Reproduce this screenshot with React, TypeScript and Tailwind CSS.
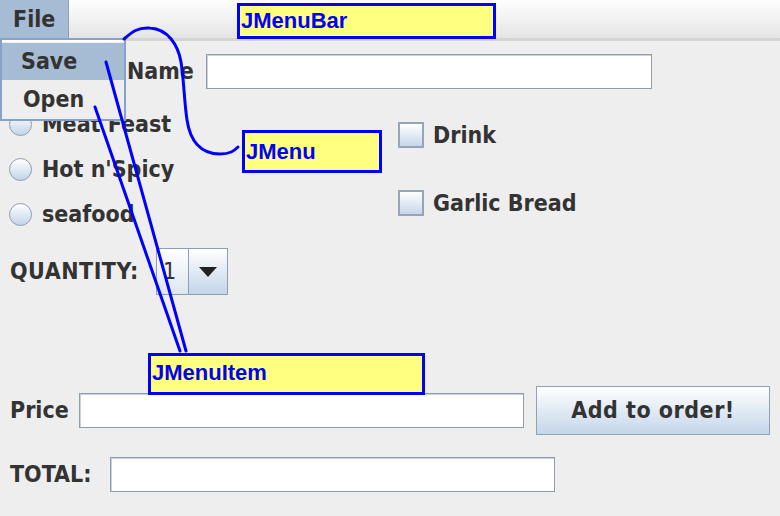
import type { ReactNode } from "react";

const ui = "font-['DejaVu_Sans_Condensed','DejaVu_Sans',sans-serif] font-bold text-[23px] text-[#333333]";

function Field({ className = "" }: { className?: string }) {
  return (
    <div
      className={`h-[35px] border border-[#8f9dab] bg-white shadow-[inset_1px_1px_0_#c9d2dc] ${className}`}
    />
  );
}

function Radio({ label }: { label: string }) {
  return (
    <div className="flex h-[45px] items-center gap-[10px]">
      <span className="h-[23px] w-[23px] rounded-full border border-[#8e9db0] bg-gradient-to-b from-white to-[#c3d4e8]" />
      <span>{label}</span>
    </div>
  );
}

function Check({ label }: { label: string }) {
  return (
    <div className="flex h-[26px] items-center gap-[9px]">
      <span className="h-[26px] w-[26px] border-2 border-[#95a5b6] bg-gradient-to-b from-white to-[#c6d6e9]" />
      <span>{label}</span>
    </div>
  );
}

function Note({ className, children }: { className: string; children: ReactNode }) {
  return (
    <div
      className={`absolute flex items-center border-[3px] border-[#0000ff] bg-[#ffff80] pl-[1px] font-['Liberation_Sans',Arial,sans-serif] text-[22px] font-bold leading-none text-[#0000ff] ${className}`}
    >
      {children}
    </div>
  );
}

export default function App() {
  return (
    <div className={`relative h-[516px] w-[780px] overflow-hidden bg-[#eeeeee] ${ui}`}>
      {/* menu bar */}
      <div className="flex h-[41px] border-b-[3px] border-[#d4d4d4] bg-gradient-to-b from-white to-[#e4e4e4]">
        <div className="flex h-[38px] w-[69px] items-center border-r border-[#8ca0b8] bg-[#a6bbd4] pl-[13px]">
          File
        </div>
      </div>

      {/* form */}
      <div className="flex flex-col">
        <div className="mt-[13px] flex items-center">
          <span className="ml-[127px] w-[79px]">Name</span>
          <Field className="w-[446px]" />
        </div>

        <div className="mt-[13px] flex">
          <div className="ml-[9px] flex w-[389px] flex-col">
            <Radio label="Meat Feast" />
            <Radio label="Hot n'Spicy" />
            <Radio label="seafood" />
          </div>
          <div className="flex flex-col gap-[42px] pt-[20px]">
            <Check label="Drink" />
            <Check label="Garlic Bread" />
          </div>
        </div>

        <div className="mt-[11px] flex items-center">
          <span className="ml-[10px] w-[146px] tracking-[0.5px]">QUANTITY:</span>
          <div className="flex h-[47px] w-[72px] border border-[#8e9db0]">
            <div className="flex w-[32px] items-center border-r border-[#8e9db0] bg-gradient-to-b from-white to-[#dde6f0] pl-[6px] font-normal">
              1
            </div>
            <div className="flex flex-1 items-center justify-center bg-gradient-to-b from-white to-[#c4d5e8]">
              <svg width="18" height="10" viewBox="0 0 18 10">
                <path d="M0 0H18L9 10Z" fill="#222" />
              </svg>
            </div>
          </div>
        </div>

        <div className="mt-[91px] flex items-center">
          <span className="ml-[10px] w-[69px]">Price</span>
          <Field className="w-[445px]" />
          <button className="ml-[12px] h-[49px] w-[234px] border border-[#8ea3b8] bg-gradient-to-b from-white to-[#c4d6ea] font-bold tracking-[0.5px] text-[#333333]">
            Add to order!
          </button>
        </div>

        <div className="mt-[22px] flex items-center">
          <span className="ml-[10px] w-[100px]">TOTAL:</span>
          <Field className="w-[445px]" />
        </div>
      </div>

      {/* open File menu */}
      <div className="absolute left-0 top-[38px] w-[126px] border-2 border-[#86a2cb] bg-[#eeeeee] pt-[3px] shadow-[inset_0_2px_0_white]">
        <div className="flex h-[37px] items-center bg-[#a6bbd4] pl-[19px]">Save</div>
        <div className="flex h-[39px] items-center pl-[21px]">Open</div>
      </div>

      {/* annotations */}
      <Note className="left-[237px] top-[3px] h-[36px] w-[259px]">JMenuBar</Note>
      <Note className="left-[242px] top-[130px] h-[43px] w-[140px]">JMenu</Note>
      <Note className="left-[148px] top-[353px] h-[42px] w-[277px] items-start pt-[6px]">JMenuItem</Note>

      <svg className="pointer-events-none absolute left-0 top-0" width="780" height="516">
        <g fill="none" stroke="#0000ff" strokeWidth="3" strokeLinecap="round">
          <path d="M124 39 C132 32 138 27 150 28 C168 29 178 45 181 62 C184 80 184 100 187 120 C190 140 200 154 220 154 C230 154 234 151 238 147" />
          <path d="M106 62 L186 351" />
          <path d="M95 107 L180 351" />
        </g>
      </svg>
    </div>
  );
}
